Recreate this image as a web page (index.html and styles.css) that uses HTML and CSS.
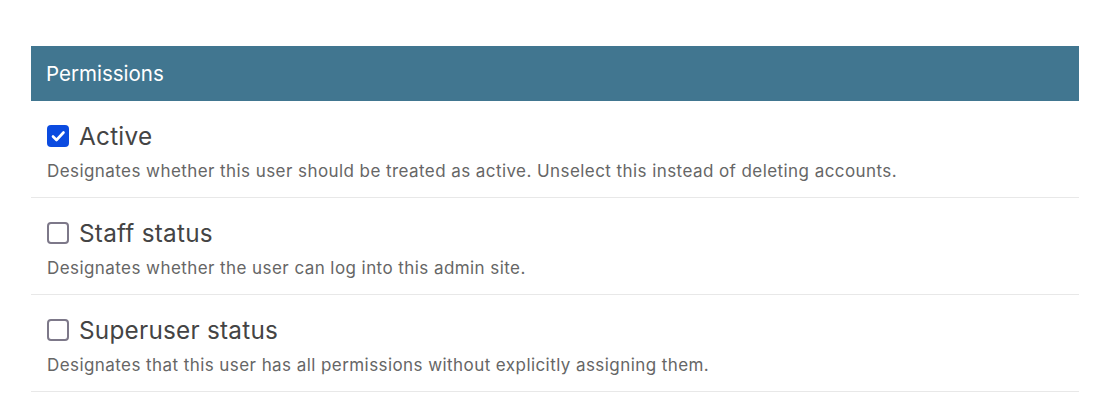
FILE: index.html
```html
<!DOCTYPE html>
<html>
<head>
<meta charset="utf-8">
<link rel="stylesheet" href="styles.css">
</head>
<body>
<div class="page">
  <fieldset class="module">
    <h2 class="module-title">Permissions</h2>
    <div class="form-row">
      <div class="check-line">
        <span class="box checked"><svg viewBox="0 0 22 22" width="22" height="22"><path d="M6 11.5 L9.5 15 L16.5 7.5" fill="none" stroke="#fff" stroke-width="2.6" stroke-linecap="round" stroke-linejoin="round"/></svg></span>
        <label class="label">Active</label>
      </div>
      <div class="help">Designates whether this user should be treated as active. Unselect this instead of deleting accounts.</div>
    </div>
    <div class="form-row">
      <div class="check-line">
        <span class="box"></span>
        <label class="label">Staff status</label>
      </div>
      <div class="help">Designates whether the user can log into this admin site.</div>
    </div>
    <div class="form-row">
      <div class="check-line">
        <span class="box"></span>
        <label class="label">Superuser status</label>
      </div>
      <div class="help">Designates that this user has all permissions without explicitly assigning them.</div>
    </div>
  </fieldset>
</div>
</body>
</html>
```
FILE: styles.css
```css
html, body {
  margin: 0;
  padding: 0;
  background: #fff;
}
body {
  font-family: Inter, "Liberation Sans", Arial, sans-serif;
}
.page {
  padding: 46px 31px 0 31px;
}
.module {
  margin: 0;
  padding: 0;
  border: none;
  width: 1048px;
}
.module-title {
  margin: 0;
  height: 55px;
  background: #417690;
  color: #fff;
  font-weight: normal;
  font-size: 20.5px;
  line-height: 55px;
  padding-left: 15px;
}
.form-row {
  padding: 20px 16px 16px 16px;
  border-bottom: 1px solid #e8e8e8;
}
.check-line {
  display: flex;
  align-items: center;
  height: 30px;
}
.box {
  box-sizing: border-box;
  width: 22px;
  height: 22px;
  border: 2px solid #7d7889;
  border-radius: 4px;
  background: #fff;
  display: flex;
}
.box.checked {
  border: none;
  background: #0b4be0;
}
.label {
  margin-left: 10px;
  font-size: 24.3px;
  letter-spacing: 0.25px;
  color: #444;
  line-height: 30px;
}
.help {
  margin-top: 10px;
  font-size: 17px;
  letter-spacing: 0.43px;
  line-height: 20px;
  color: #666;
}
```
